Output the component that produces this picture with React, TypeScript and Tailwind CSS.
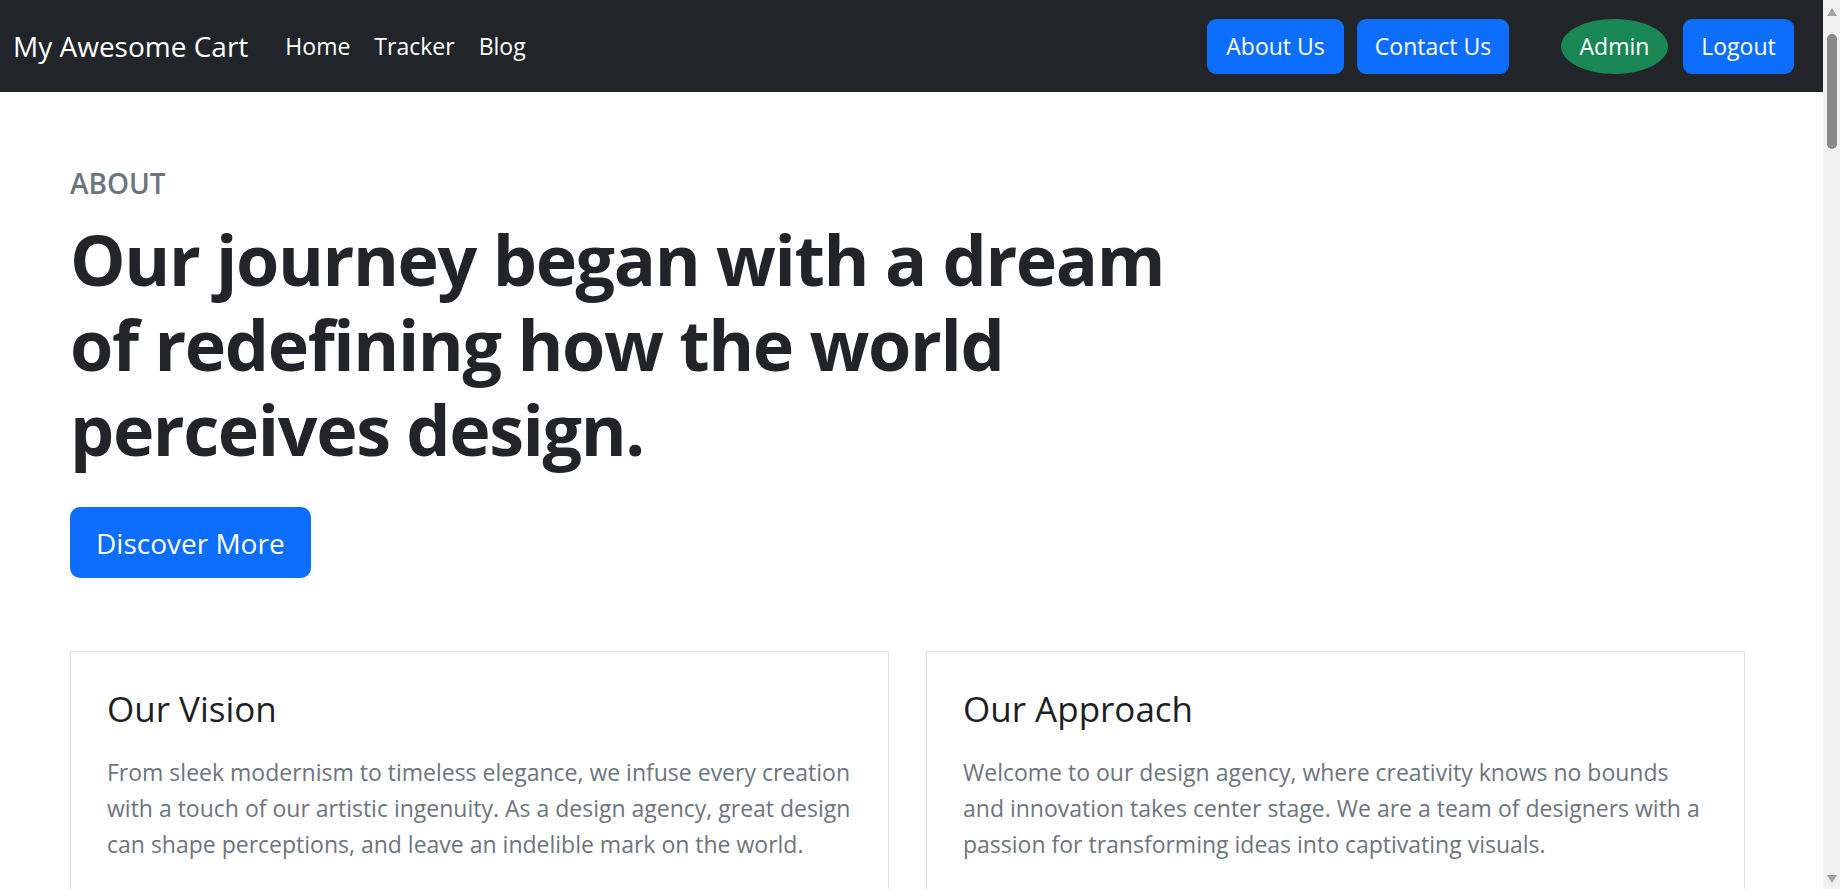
import React from 'react';

// Simple landing page: dark navbar, about hero and two info cards
const navLinks = ['Home', 'Tracker', 'Blog'];

const cards = [
  {
    title: 'Our Vision',
    text: 'From sleek modernism to timeless elegance, we infuse every creation with a touch of our artistic ingenuity. As a design agency, great design can shape perceptions, and leave an indelible mark on the world.',
  },
  {
    title: 'Our Approach',
    text: 'Welcome to our design agency, where creativity knows no bounds and innovation takes center stage. We are a team of designers with a passion for transforming ideas into captivating visuals.',
  },
];

const NavButton: React.FC<{ label: string; className?: string }> = ({ label, className }) => (
  <button
    className={`h-[55px] flex items-center justify-center text-[23px] text-white bg-[#0d6efd] rounded-[9px] ${className ?? ''}`}
  >
    {label}
  </button>
);

const FakeScrollbar: React.FC = () => (
  <div className="fixed top-0 right-0 h-screen w-[17px] bg-[#f1f1f1] flex flex-col items-center">
    <svg width="10" height="8" viewBox="0 0 10 8" className="mt-[8px]">
      <path d="M5 0 L10 8 L0 8 Z" fill="#a3a3a3" />
    </svg>
    <div className="mt-[18px] w-[10px] h-[115px] rounded-full bg-[#8a8a8a]" />
    <div className="flex-1" />
    <svg width="10" height="8" viewBox="0 0 10 8" className="mb-[6px]">
      <path d="M0 0 L10 0 L5 8 Z" fill="#a3a3a3" />
    </svg>
  </div>
);

export default function App() {
  return (
    <div className="min-h-screen bg-white font-['Open_Sans',sans-serif] text-[#212529]">
      <nav className="h-[92px] bg-[#212529] flex items-center pl-[13px] pr-[46px]">
        <a href="#" className="text-[28px] text-white">My Awesome Cart</a>
        <ul className="flex items-center ml-[37px] gap-[24px]">
          {navLinks.map((link) => (
            <li key={link}>
              <a href="#" className="text-[23px] text-white">{link}</a>
            </li>
          ))}
        </ul>
        <div className="ml-auto flex items-center">
          <NavButton label="About Us" className="w-[137px]" />
          <NavButton label="Contact Us" className="w-[152px] ml-[13px]" />
          <span className="ml-[52px] w-[107px] h-[55px] flex items-center justify-center rounded-[50%] bg-[#198754] text-white text-[23px]">
            Admin
          </span>
          <NavButton label="Logout" className="w-[111px] ml-[15px]" />
        </div>
      </nav>

      <main className="px-[70px] pt-[74px] pb-[80px]">
        <h4 className="text-[28px] leading-[34px] font-semibold text-[#6c757d]">ABOUT</h4>
        <h1 className="mt-[17px] w-[1150px] text-[70px] leading-[85px] font-bold tracking-[-0.02em]">
          Our journey began with a dream of redefining how the world perceives design.
        </h1>
        <button className="mt-[35px] h-[71px] px-[26px] rounded-[10px] bg-[#0d6efd] text-white text-[28px]">
          Discover More
        </button>

        <div className="mt-[73px] w-[1675px] grid grid-cols-2 gap-[37px]">
          {cards.map((card) => (
            <div key={card.title} className="border border-[#dee2e6] px-[36px] pt-[36px] pb-[60px]">
              <h3 className="text-[35px] leading-[42px] font-medium text-[#1c1f23]">{card.title}</h3>
              <p className="mt-[24px] text-[23px] leading-[36px] text-[#6c757d]">{card.text}</p>
            </div>
          ))}
        </div>
      </main>

      <FakeScrollbar />
    </div>
  );
}
